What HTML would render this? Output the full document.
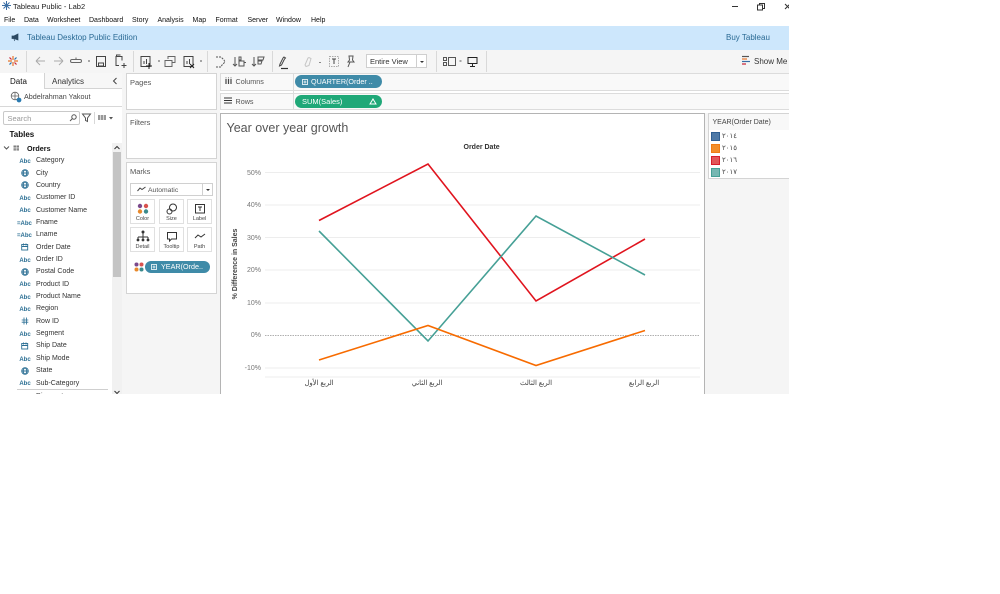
<!DOCTYPE html>
<html><head><meta charset="utf-8">
<style>
html,body{margin:0;padding:0;background:#fff;}
body{width:1000px;height:594px;position:relative;overflow:hidden;font-family:"Liberation Sans","Noto Sans CJK SC",sans-serif;}
#app{position:absolute;left:0;top:0;width:789px;height:394px;overflow:hidden;background:#fff;}
.a{position:absolute;}
.t{position:absolute;white-space:nowrap;line-height:12px;font-size:7.5px;color:#333;margin-top:1px;}
.p{position:absolute;background:#fff;border:1px solid #d4d4d4;box-sizing:border-box;}
.pill{position:absolute;border-radius:7px;color:#fff;font-size:7.2px;line-height:13px;height:13px;white-space:nowrap;box-sizing:border-box;}
.f{position:absolute;left:36px;font-size:7px;line-height:12px;color:#333;white-space:nowrap;margin-top:1px;}
.i{position:absolute;left:18px;width:14px;text-align:center;font-size:6px;line-height:12px;font-weight:bold;color:#2a6e93;white-space:nowrap;margin-top:1px;}
.mb{position:absolute;width:25px;height:25px;border:1px solid #e0e0e0;background:#fff;box-sizing:border-box;}
.mb span{position:absolute;left:-3px;right:-3px;bottom:0;text-align:center;font-size:5.5px;line-height:8px;color:#444;}
.mb svg{position:absolute;left:5px;top:2px;}
svg{position:absolute;overflow:visible;}
.sep{position:absolute;top:51px;width:1px;height:21px;background:#d9d9d9;}
.sw{position:absolute;left:711px;width:9px;height:9px;box-sizing:border-box;border:1px solid;}
</style></head><body>
<div id="app">
<!-- title bar -->
<svg style="left:2px;top:1px" width="9" height="9" viewBox="0 0 9 9"><g stroke="#3a6ea5" stroke-width="1" fill="none"><path d="M4.5 0v9M0 4.5h9M1.5 1.5l6 6M7.5 1.5l-6 6"/></g></svg>
<div class="t" style="left:13px;top:0;font-size:7.5px;color:#222">Tableau Public - Lab2</div>
<svg style="left:730px;top:2px" width="60" height="9"><path d="M2 4.500h6" stroke="#333" stroke-width="1"/><rect x="27.500" y="3" width="5" height="5" fill="none" stroke="#333"/><path d="M29.500 3v-1.500h5v5h-2" fill="none" stroke="#333"/><path d="M55 2l5 5M60 2l-5 5" stroke="#333"/></svg>
<!-- menu -->
<div class="t" style="left:4px;top:13.500px;color:#111;font-size:7px">File</div>
<div class="t" style="left:24px;top:13.500px;color:#111;font-size:7px">Data</div>
<div class="t" style="left:47px;top:13.500px;color:#111;font-size:7px">Worksheet</div>
<div class="t" style="left:89px;top:13.500px;color:#111;font-size:7px">Dashboard</div>
<div class="t" style="left:132px;top:13.500px;color:#111;font-size:7px">Story</div>
<div class="t" style="left:157.500px;top:13.500px;color:#111;font-size:7px">Analysis</div>
<div class="t" style="left:192.500px;top:13.500px;color:#111;font-size:7px">Map</div>
<div class="t" style="left:215.500px;top:13.500px;color:#111;font-size:7px">Format</div>
<div class="t" style="left:247.500px;top:13.500px;color:#111;font-size:7px">Server</div>
<div class="t" style="left:276px;top:13.500px;color:#111;font-size:7px">Window</div>
<div class="t" style="left:311px;top:13.500px;color:#111;font-size:7px">Help</div>
<!-- banner -->
<div class="a" style="left:0;top:26px;width:789px;height:24px;background:#cde7fc"></div>
<svg style="left:11px;top:33px" width="9" height="9" viewBox="0 0 9 9"><path d="M1 3h2l4-2v6L3 5.500H1zM3 5.500l.5 2.500" fill="#2d4a63" stroke="#2d4a63" stroke-width=".7"/></svg>
<div class="t" style="left:27px;top:31px;color:#2a6a94;font-size:8px">Tableau Desktop Public Edition</div>
<div class="t" style="left:726px;top:30.500px;color:#2a6a94;font-size:8px">Buy Tableau</div>
<!-- toolbar -->
<div class="a" style="left:0;top:50px;width:789px;height:23px;background:#f5f5f5;border-bottom:1px solid #d8d8d8"></div>
<div class="sep" style="left:26px"></div><div class="sep" style="left:133px"></div><div class="sep" style="left:207px"></div><div class="sep" style="left:272px"></div><div class="sep" style="left:436px"></div><div class="sep" style="left:486px"></div>
<svg style="left:8px;top:56px" width="10" height="10" viewBox="0 0 10 10"><path d="M5 0v4M5 6v4M0 5h4M6 5h4" stroke="#e8762c" stroke-width="1.200"/><path d="M1.500 1.500l2 2M6.500 6.500l2 2" stroke="#c72035" stroke-width="1.200"/><path d="M8.500 1.500l-2 2M3.500 6.500l-2 2" stroke="#1f6ea8" stroke-width="1.200"/></svg>
<svg style="left:34px;top:54px" width="200" height="16" fill="none" stroke="#aaa" stroke-width="1">
<path d="M2 7h9M2 7l4-4M2 7l4 4"/>
<path d="M21 7h9M30 7l-4-4M30 7l-4 4" transform="translate(-1,0)"/>
<path d="M38 5.500h4V3.500l0 2h4a1.500 1.500 0 0 1 0 3h-8a1.500 1.500 0 0 1 0-3z" stroke="#666"/>
<path d="M54 7h2" stroke="#555"/>
<rect x="62.500" y="2.500" width="9" height="10" stroke="#444"/><rect x="64.500" y="9" width="5" height="3" stroke="#444"/>
<path d="M85 11.500h-3v-9h6v4M82.500 2v-1h4M90 9v5M87.500 11.500h5" stroke="#444"/>
<path d="M107 2.500h9v10h-9zM110 10V7M112.500 10V5" stroke="#444"/><path d="M115 9v6M112 12h6" stroke="#222"/>
<path d="M124 7h2" stroke="#555"/>
<path d="M131 6.500h7v6h-7zM134 5V2.500h7v6h-3" stroke="#666"/>
<path d="M150 2.500h9v10h-9zM153 10V7M155.500 10V5" stroke="#444"/><path d="M156 10l4 4M160 10l-4 4" stroke="#222"/>
<path d="M166 7h2" stroke="#555"/>
</svg>
<svg style="left:215px;top:54px" width="160" height="16" fill="none" stroke="#555" stroke-width="1">
<path d="M1 3h5l3 3 1 2-3 3-1 2H1" stroke-dasharray="2 1"/>
<path d="M20 3v9M18 10l2 2 2-2M24 3h2v3h-2zM24 7h5v5h-5z"/>
<path d="M39 3v9M37 10l2 2 2-2M43 3h6l-1 3h-5zM43 7h4l-1 3h-3z" />
<path d="M69 3l-1 1-3 6-.5 2 2-1 3-6 1-1z" stroke="#444"/><path d="M66 14.500h7" stroke="#333" stroke-width="1.200"/>
<path d="M93 4l-3 7 1 1.500 3-1 2-7-2-1z" stroke="#c6c6c6"/>
<rect x="114.500" y="2.500" width="9" height="10" stroke="#aaa" stroke-dasharray="1.500 1"/><path d="M117 5h4M119 5v5" stroke="#444"/>
<path d="M134 2h4l-.5 4 1.500 2h-6l1.500-2zM135 8l-2 5"/>
</svg>
<div class="a" style="left:244px;top:62px;width:2px;height:1px;background:#555"></div>
<div class="a" style="left:319px;top:62px;width:2px;height:1px;background:#888" ></div>
<div class="a" style="left:366px;top:54px;width:61px;height:14px;background:#fff;border:1px solid #cfcfcf;box-sizing:border-box"></div>
<div class="t" style="left:370px;top:54.500px;color:#333;font-size:7.500px">Entire View</div>
<div class="a" style="left:416px;top:54px;width:1px;height:14px;background:#cfcfcf"></div>
<div class="a" style="left:419.500px;top:60.500px;width:0;height:0;border-left:2px solid transparent;border-right:2px solid transparent;border-top:2px solid #333"></div>
<svg style="left:443px;top:56px" width="45" height="12" fill="none" stroke="#555"><path d="M.5 1.500h3v3h-3zM.5 6.500h3v3h-3z"/><rect x="5.500" y="1.500" width="7" height="8"/><path d="M16.500 5h2" /><path d="M25 1.500h9v6h-9zM29.500 7.500v3M27 10.500h5" stroke="#222"/></svg>
<svg style="left:741px;top:55px" width="11" height="12"><path d="M1 1.500h7" stroke="#555" stroke-width="1.200"/><path d="M1 4h5" stroke="#e8762c" stroke-width="1.200"/><path d="M1 6.500h8" stroke="#3a6ea5" stroke-width="1.200"/><path d="M1 9h4" stroke="#c72035" stroke-width="1.200"/></svg>
<div class="t" style="left:754px;top:54.500px;color:#333;font-size:8px">Show Me</div>

<!-- left pane -->
<div class="a" style="left:0;top:73px;width:122px;height:321px;background:#fff;border-right:1px solid #d4d4d4;box-sizing:content-box"></div>
<div class="a" style="left:44px;top:73px;width:78px;height:16px;background:#f7f7f7;border-left:1px solid #d4d4d4;border-bottom:1px solid #d4d4d4;box-sizing:border-box"></div>
<div class="t" style="left:10px;top:74.500px;color:#111;font-size:8px">Data</div>
<div class="t" style="left:52px;top:74.500px;color:#333;font-size:8px">Analytics</div>
<svg style="left:112px;top:77px" width="6" height="8"><path d="M4.500 1L1.500 4l3 3" fill="none" stroke="#444"/></svg>
<svg style="left:10px;top:91px" width="12" height="12" fill="none" stroke="#666" stroke-width=".8"><circle cx="5" cy="5" r="3.800"/><path d="M1 5h8M5 1v8"/><circle cx="9" cy="9" r="2" fill="#2a7ab0" stroke="#2a7ab0"/></svg>
<div class="t" style="left:24px;top:90px;color:#444;font-size:7.200px">Abdelrahman Yakout</div>
<div class="a" style="left:0;top:106px;width:122px;height:1px;background:#d8d8d8"></div>
<div class="a" style="left:3px;top:111px;width:77px;height:14px;border:1px solid #c9c9c9;border-radius:2px;box-sizing:border-box"></div>
<div class="t" style="left:7.500px;top:111.500px;color:#999;font-size:7.500px">Search</div>
<svg style="left:69px;top:113px" width="9" height="10" fill="none" stroke="#555"><circle cx="5" cy="4" r="2.200"/><path d="M3.500 5.500L1 8"/></svg>
<svg style="left:82px;top:113px" width="9" height="10" fill="none" stroke="#555"><path d="M.5 1h8L5.500 5v3.500l-2-1V5z"/></svg>
<div class="a" style="left:94px;top:112px;width:1px;height:12px;background:#d8d8d8"></div>
<svg style="left:98px;top:114px" width="15" height="8"><rect x="0" y="1" width="8" height="5" fill="#999"/><path d="M2.700 1v5M5.300 1v5" stroke="#fff" stroke-width=".6"/><path d="M11 3h4l-2 2.500z" fill="#555"/></svg>
<div class="t" style="left:9.500px;top:127.500px;color:#111;font-size:8px;font-weight:bold">Tables</div>
<svg style="left:3px;top:145px" width="7" height="6"><path d="M1 1.500l2.500 2.500L6 1.500" fill="none" stroke="#555"/></svg>
<svg style="left:13px;top:145px" width="7" height="6"><rect x=".5" y=".5" width="5.500" height="5" fill="#777"/><path d="M.5 2.200h5.500M.5 3.900h5.500M3.200.5v5" stroke="#fff" stroke-width=".5"/></svg>
<div class="t" style="left:27px;top:141.500px;color:#111;font-size:7.200px;font-weight:bold">Orders</div>

<div class="i" style="top:154.500px">Abc</div><div class="f" style="top:154px">Category</div>
<svg style="left:21px;top:169px" width="8" height="8" fill="none" stroke="#2a6e93" stroke-width=".9"><circle cx="4" cy="4" r="3.300"/><path d="M.7 4h6.600M4 .7c-2.500 2-2.500 4.600 0 6.600M4 .7c2.500 2 2.500 4.600 0 6.600"/></svg><div class="f" style="top:166.500px">City</div>
<svg style="left:21px;top:181px" width="8" height="8" fill="none" stroke="#2a6e93" stroke-width=".9"><circle cx="4" cy="4" r="3.300"/><path d="M.7 4h6.600M4 .7c-2.500 2-2.500 4.600 0 6.600M4 .7c2.500 2 2.500 4.600 0 6.600"/></svg><div class="f" style="top:178.500px">Country</div>
<div class="i" style="top:191.500px">Abc</div><div class="f" style="top:191px">Customer ID</div>
<div class="i" style="top:204px">Abc</div><div class="f" style="top:203.500px">Customer Name</div>
<div class="i" style="top:216.500px;left:17px">=Abc</div><div class="f" style="top:215.500px">Fname</div>
<div class="i" style="top:229px;left:17px">=Abc</div><div class="f" style="top:228px">Lname</div>
<svg style="left:21px;top:243px" width="8" height="8" fill="none" stroke="#2a6e93" stroke-width=".9"><rect x=".7" y="1.500" width="6" height="5.500"/><path d="M.7 3.500h6M2.500.5v2M5 .5v2"/></svg><div class="f" style="top:240.500px">Order Date</div>
<div class="i" style="top:253.500px">Abc</div><div class="f" style="top:252.500px">Order ID</div>
<svg style="left:21px;top:268px" width="8" height="8" fill="none" stroke="#2a6e93" stroke-width=".9"><circle cx="4" cy="4" r="3.300"/><path d="M.7 4h6.600M4 .7c-2.500 2-2.500 4.600 0 6.600M4 .7c2.500 2 2.500 4.600 0 6.600"/></svg><div class="f" style="top:265px">Postal Code</div>
<div class="i" style="top:278px">Abc</div><div class="f" style="top:277.500px">Product ID</div>
<div class="i" style="top:290.500px">Abc</div><div class="f" style="top:289.500px">Product Name</div>
<div class="i" style="top:303px">Abc</div><div class="f" style="top:302px">Region</div>
<svg style="left:21px;top:317px" width="8" height="8" fill="none" stroke="#2a6e93" stroke-width=".8"><path d="M3 .5v7M5.500.5v7M.7 3h6.600M.7 5.200h6.600"/></svg><div class="f" style="top:314.500px">Row ID</div>
<div class="i" style="top:327.500px">Abc</div><div class="f" style="top:327px">Segment</div>
<svg style="left:21px;top:341.500px" width="8" height="8" fill="none" stroke="#2a6e93" stroke-width=".9"><rect x=".7" y="1.500" width="6" height="5.500"/><path d="M.7 3.500h6M2.500.5v2M5 .5v2"/></svg><div class="f" style="top:339px">Ship Date</div>
<div class="i" style="top:352.500px">Abc</div><div class="f" style="top:351.500px">Ship Mode</div>
<svg style="left:21px;top:366.500px" width="8" height="8" fill="none" stroke="#2a6e93" stroke-width=".9"><circle cx="4" cy="4" r="3.300"/><path d="M.7 4h6.600M4 .7c-2.500 2-2.500 4.600 0 6.600M4 .7c2.500 2 2.500 4.600 0 6.600"/></svg><div class="f" style="top:364px">State</div>
<div class="i" style="top:377px">Abc</div><div class="f" style="top:376.500px">Sub-Category</div>
<div class="a" style="left:17px;top:389px;width:91px;height:1px;background:#cfcfcf"></div>
<div class="f" style="top:389.500px">Discount</div>
<div class="a" style="left:112px;top:143px;width:10px;height:251px;background:#f1f1f1"></div>
<div class="a" style="left:113px;top:152px;width:8px;height:125px;background:#c4c4c4"></div>
<svg style="left:113px;top:145px" width="8" height="5"><path d="M1.500 4L4 1.500 6.500 4" fill="none" stroke="#333"/></svg>
<svg style="left:113px;top:390px" width="8" height="4"><path d="M1.500 1L4 3.500 6.500 1" fill="none" stroke="#333"/></svg>

<!-- middle cards -->
<div class="a" style="left:122px;top:73px;width:98px;height:321px;background:#f5f5f5"></div>
<div class="p" style="left:126px;top:73px;width:91px;height:37px"></div>
<div class="t" style="left:130px;top:75.500px;color:#555;font-size:7.500px">Pages</div>
<div class="p" style="left:126px;top:113px;width:91px;height:46px"></div>
<div class="t" style="left:130px;top:115.500px;color:#555;font-size:7.500px">Filters</div>
<div class="p" style="left:126px;top:162px;width:91px;height:132px"></div>
<div class="t" style="left:130px;top:165px;color:#555;font-size:7.500px">Marks</div>
<div class="a" style="left:130px;top:183px;width:83px;height:13px;border:1px solid #d0d0d0;box-sizing:border-box;background:#fff"></div>
<svg style="left:137px;top:186px" width="9" height="6"><path d="M.5 5l2.500-3 2 1.500L8.500 1" fill="none" stroke="#444"/></svg>
<div class="t" style="left:148px;top:183.500px;color:#555;font-size:6.800px">Automatic</div>
<div class="a" style="left:202px;top:183px;width:1px;height:13px;background:#d0d0d0"></div>
<div class="a" style="left:205.500px;top:189px;width:0;height:0;border-left:2px solid transparent;border-right:2px solid transparent;border-top:2px solid #333"></div>

<div class="mb" style="left:130px;top:199px"><svg width="14" height="14"><circle cx="4" cy="4" r="2.200" fill="#7b4a8c"/><circle cx="10" cy="4" r="2.200" fill="#d9534f"/><circle cx="4" cy="9.500" r="2.200" fill="#e8892c"/><circle cx="10" cy="9.500" r="2.200" fill="#3b8a8c"/></svg><span>Color</span></div>
<div class="mb" style="left:159px;top:199px"><svg width="14" height="14" fill="none" stroke="#333"><circle cx="8" cy="5.500" r="3.500"/><circle cx="4.500" cy="9.500" r="2.500"/></svg><span>Size</span></div>
<div class="mb" style="left:187px;top:199px"><svg width="14" height="14" fill="none" stroke="#333"><rect x="2.500" y="2.500" width="9" height="8.500"/><path d="M5 5h4M7 5v4"/></svg><span>Label</span></div>
<div class="mb" style="left:130px;top:227px"><svg width="14" height="14" fill="#333"><circle cx="7" cy="2" r="1.500"/><path d="M2 7h10M7 3v4M2 7v2M7 7v2M12 7v2" stroke="#333" fill="none"/><circle cx="2" cy="10" r="1.400"/><circle cx="7" cy="10" r="1.400"/><circle cx="12" cy="10" r="1.400"/></svg><span>Detail</span></div>
<div class="mb" style="left:159px;top:227px"><svg width="14" height="14" fill="none" stroke="#333"><path d="M2.500 2.500h9v6.500h-5l-2 2v-2h-2z"/></svg><span>Tooltip</span></div>
<div class="mb" style="left:187px;top:227px"><svg width="14" height="14" fill="none" stroke="#333"><path d="M2 8l3-3 3 2 4-3"/></svg><span>Path</span></div>

<svg style="left:134px;top:262px" width="10" height="10"><circle cx="2.500" cy="2.500" r="2" fill="#7b4a8c"/><circle cx="7.500" cy="2.500" r="2" fill="#d9534f"/><circle cx="2.500" cy="7.500" r="2" fill="#e8892c"/><circle cx="7.500" cy="7.500" r="2" fill="#3b8a8c"/></svg>
<div class="pill" style="left:145px;top:261px;width:65px;height:12px;line-height:12px;background:#3f8ba8;border-radius:6px;padding-left:16px">YEAR(Orde..</div>
<svg style="left:151px;top:264px" width="7" height="7" fill="none" stroke="#fff" stroke-width=".8"><rect x=".5" y=".5" width="5" height="5"/><path d="M1.500 3h3M3 1.500v3"/></svg>

<!-- shelves -->
<div class="a" style="left:220px;top:73px;width:569px;height:18px;background:#f9f9f9;border:1px solid #dcdcdc;border-right:none;box-sizing:border-box"></div>
<div class="a" style="left:220px;top:93px;width:569px;height:17px;background:#f9f9f9;border:1px solid #dcdcdc;border-right:none;box-sizing:border-box"></div>
<div class="a" style="left:293px;top:73px;width:1px;height:37px;background:#dcdcdc"></div>
<svg style="left:225px;top:77px" width="7" height="8"><path d="M1 2v5M3.500 2v5M6 2v5" stroke="#444" stroke-width="1.200"/><path d="M1 .5v.7M3.500 .5v.7M6 .5v.7" stroke="#444"/></svg>
<div class="t" style="left:235.500px;top:74.500px;color:#555;font-size:7.200px">Columns</div>
<svg style="left:224px;top:97px" width="8" height="7"><path d="M0 1h8M0 3.500h8M0 6h8" stroke="#333"/></svg>
<div class="t" style="left:235.500px;top:95px;color:#555;font-size:7.200px">Rows</div>
<div class="pill" style="left:295px;top:75px;width:87px;height:13px;background:#3f8ba8;padding-left:16px">QUARTER(Order ..</div>
<svg style="left:302px;top:78.500px" width="7" height="7" fill="none" stroke="#fff" stroke-width=".8"><rect x=".5" y=".5" width="5" height="5"/><path d="M1.500 3h3M3 1.500v3"/></svg>
<div class="pill" style="left:295px;top:95px;width:87px;height:13px;background:#1fa878;padding-left:7px;font-size:7.500px">SUM(Sales)</div>
<svg style="left:369px;top:97.500px" width="8" height="7"><path d="M4 1L7 6H1z" fill="none" stroke="#fff"/></svg>

<!-- viz -->
<div class="a" style="left:220px;top:113px;width:485px;height:290px;background:#fff;border:1px solid #b4b4b4;box-sizing:border-box"></div>
<div class="t" style="left:226.500px;top:120px;font-size:12.500px;line-height:15px;color:#555">Year over year growth</div>
<div class="t" style="left:463.500px;top:141px;font-size:7px;font-weight:bold;color:#333">Order Date</div>
<svg style="left:0;top:0" width="789" height="394">
<g stroke="#ededed" stroke-width="1"><path d="M265 172.500H700M265 205H700M265 237.500H700M265 270H700M265 303H700M265 368H700M265 377H700"/></g>
<path d="M265 335.500H700" stroke="#b0b0b0" stroke-width="1" stroke-dasharray="1.500 1"/>
<g fill="none" stroke-width="1.600" stroke-linejoin="miter">
<polyline points="319,220.500 428,164 536,301 645,239" stroke="#e0141e"/>
<polyline points="319,231 428,341 536,216 645,275" stroke="#46a096"/>
<polyline points="319,360 428,325.500 536,365.500 645,330.500" stroke="#f76b00"/>
</g>
</svg>
<div class="t" style="left:236px;top:166.500px;width:25px;text-align:right;font-size:7px;color:#777">50%</div>
<div class="t" style="left:236px;top:199px;width:25px;text-align:right;font-size:7px;color:#777">40%</div>
<div class="t" style="left:236px;top:231.500px;width:25px;text-align:right;font-size:7px;color:#777">30%</div>
<div class="t" style="left:236px;top:264px;width:25px;text-align:right;font-size:7px;color:#777">20%</div>
<div class="t" style="left:236px;top:297px;width:25px;text-align:right;font-size:7px;color:#777">10%</div>
<div class="t" style="left:236px;top:329px;width:25px;text-align:right;font-size:7px;color:#777">0%</div>
<div class="t" style="left:236px;top:361.500px;width:25px;text-align:right;font-size:7px;color:#777">-10%</div>
<div class="t" style="left:236px;top:263px;width:0;height:0;font-size:7px;font-weight:bold;color:#444;line-height:0"><span style="position:absolute;left:0;top:0;transform:translate(-50%,-50%) rotate(-90deg);white-space:nowrap;line-height:10px">% Difference in Sales</span></div>
<div class="t" style="left:289px;top:377px;width:60px;text-align:center;font-size:6.800px;color:#444" dir="rtl">الربع الأول</div>
<div class="t" style="left:397px;top:377px;width:60px;text-align:center;font-size:6.800px;color:#444" dir="rtl">الربع الثاني</div>
<div class="t" style="left:506px;top:377px;width:60px;text-align:center;font-size:6.800px;color:#444" dir="rtl">الربع الثالث</div>
<div class="t" style="left:614px;top:377px;width:60px;text-align:center;font-size:6.800px;color:#444" dir="rtl">الربع الرابع</div>

<!-- legend -->
<div class="a" style="left:705px;top:113px;width:84px;height:281px;background:#f5f5f5"></div>
<div class="a" style="left:708px;top:113px;width:81px;height:66px;background:#fff;border:1px solid #d4d4d4;border-right:none;box-sizing:border-box"></div>
<div class="a" style="left:709px;top:114px;width:80px;height:16px;background:#f8f8f8"></div>
<div class="t" style="left:712.500px;top:115.500px;font-size:7px;color:#444">YEAR(Order Date)</div>
<div class="sw" style="top:132px;background:#4e79a7;border-color:#2f5f93"></div>
<div class="t" style="left:722px;top:130px;font-size:7px;color:#444">٢٠١٤</div>
<div class="sw" style="top:144px;background:#f28e2b;border-color:#ef7c14"></div>
<div class="t" style="left:722px;top:142px;font-size:7px;color:#444">٢٠١٥</div>
<div class="sw" style="top:156px;background:#e15759;border-color:#d81e2c"></div>
<div class="t" style="left:722px;top:154px;font-size:7px;color:#444">٢٠١٦</div>
<div class="sw" style="top:168px;background:#76b7b2;border-color:#46a096"></div>
<div class="t" style="left:722px;top:166px;font-size:7px;color:#444">٢٠١٧</div>
</div>
</body></html>
